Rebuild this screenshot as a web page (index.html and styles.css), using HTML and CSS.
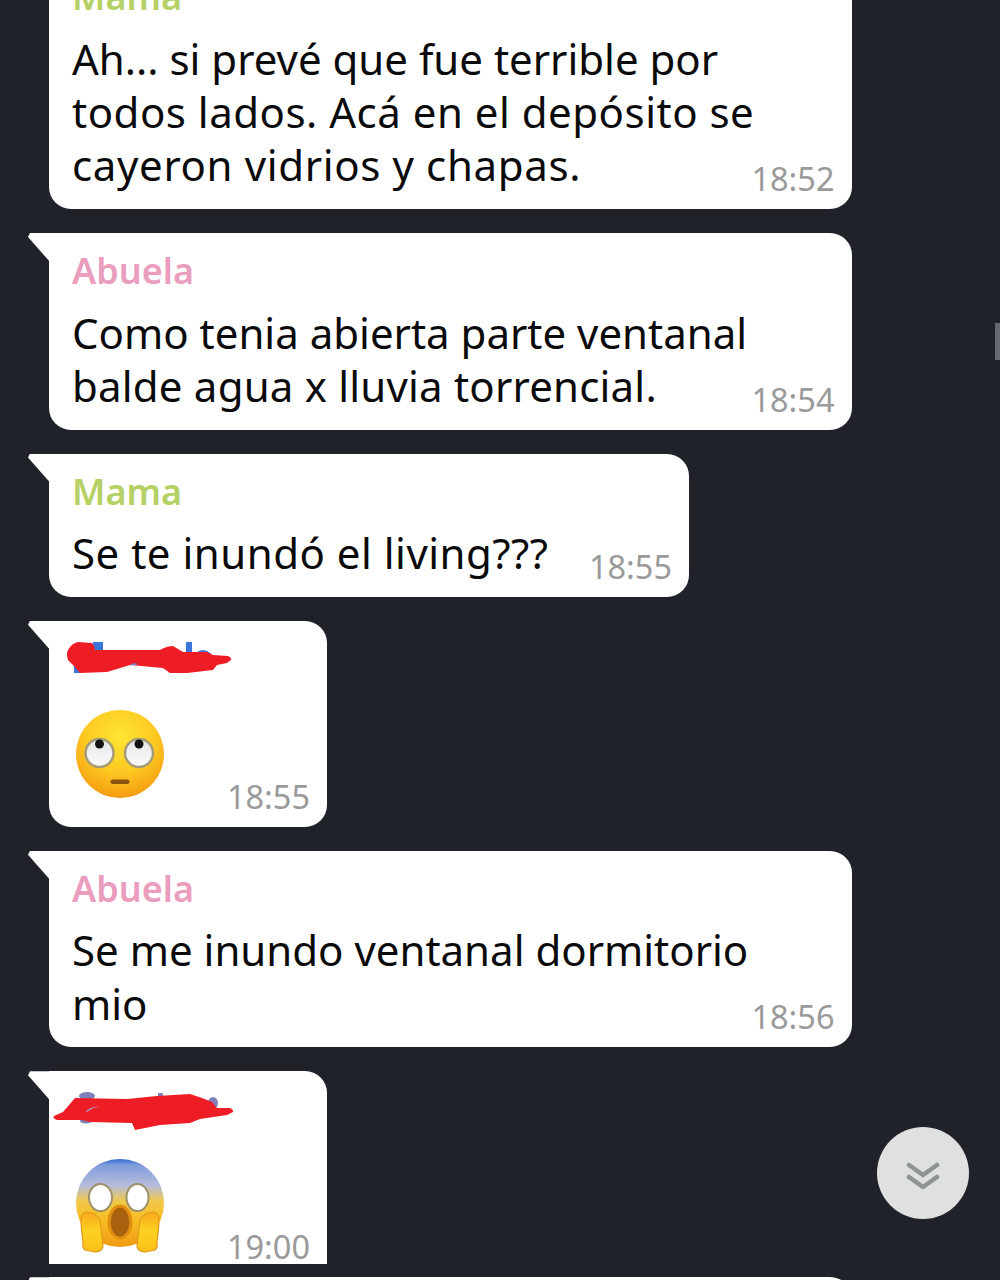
FILE: index.html
```html
<!DOCTYPE html>
<html>
<head>
    <title>Chat</title>
    <link rel="stylesheet" href="styles.css">
</head>
<body>
    <div id="chat">

        <div class="bubble wide first">
            <div class="name mama">Mama</div>
            <div class="body">
                <div class="text">Ah... si prevé que fue terrible por<br><span class="loose">todos lados. Acá en el depósito se</span><br><span class="looser">cayeron vidrios y chapas.</span></div>
                <div class="time">18:52</div>
            </div>
        </div>

        <div class="bubble wide tail">
            <div class="name abuela">Abuela</div>
            <div class="body">
                <div class="text">Como tenia abierta parte ventanal<br><span class="slight">balde agua x lluvia torrencial.</span></div>
                <div class="time">18:54</div>
            </div>
        </div>

        <div class="bubble medium tail">
            <div class="name mama">Mama</div>
            <div class="body">
                <div class="text loose">Se te inundó el living???</div>
                <div class="time">18:55</div>
            </div>
        </div>

        <div class="bubble small tail">
            <svg class="scribble" width="180" height="46" viewBox="0 0 180 46">
                <rect x="10" y="28" width="6" height="9" fill="#3a76d8"/>
                <rect x="29" y="6" width="10" height="10" fill="#3a76d8"/>
                <rect x="122" y="6" width="6" height="10" fill="#3a76d8"/>
                <circle cx="139" cy="24" r="10" fill="#3a76d8"/>
                <path d="M4 14 Q8 7 14 6 L28 7 Q31 10 31 14 L96 14 Q103 10 109 10 L119 16 L143 16 L149 19 L164 20 Q168 22 167 24 L163 27 L153 29 L149 34 L123 37 L106 37 L99 32 L66 29 L43 36 L16 37 L9 29 L4 24 Q2 18 4 14z" fill="#ee1c25"/>
                <path d="M66 29 q4 -3 8 -1 q-4 2 -8 1z" fill="#6a86d8"/>
            </svg>
            <svg class="emoji" width="90" height="90" viewBox="0 0 90 90">
                <defs>
                    <radialGradient id="face" cx="0.5" cy="0.3" r="0.72">
                        <stop offset="0" stop-color="#ffe635"/>
                        <stop offset="0.55" stop-color="#fdc922"/>
                        <stop offset="0.9" stop-color="#f6a514"/>
                        <stop offset="1" stop-color="#ee9212"/>
                    </radialGradient>
                    <linearGradient id="eyeball" x1="0" y1="0" x2="0" y2="1">
                        <stop offset="0" stop-color="#e6e6e6"/>
                        <stop offset="1" stop-color="#fbfbfb"/>
                    </linearGradient>
                </defs>
                <circle cx="45" cy="45" r="44" fill="url(#face)"/>
                <circle cx="24.5" cy="44" r="14" fill="url(#eyeball)" stroke="#a59c78" stroke-width="2.5"/>
                <circle cx="64" cy="44" r="14" fill="url(#eyeball)" stroke="#a59c78" stroke-width="2.5"/>
                <circle cx="24.5" cy="35" r="4.5" fill="#111"/>
                <circle cx="64" cy="35" r="4.5" fill="#111"/>
                <rect x="35.5" y="70.5" width="19" height="4.5" rx="2.2" fill="#8a5412"/>
            </svg>
            <div class="time">18:55</div>
        </div>

        <div class="bubble wide tail">
            <div class="name abuela">Abuela</div>
            <div class="body">
                <div class="text">Se me inundo ventanal dormitorio<br>mio</div>
                <div class="time">18:56</div>
            </div>
        </div>

        <div class="bubble small tail cut">
            <svg class="scribble" width="182" height="46" viewBox="0 0 182 46">
                <ellipse cx="34" cy="10" rx="8" ry="4" fill="#8080b8"/>
                <rect x="105" y="7" width="5" height="5" fill="#8080b8"/>
                <ellipse cx="33" cy="35" rx="6" ry="2.5" fill="#8080b8"/>
                <ellipse cx="160" cy="17" rx="5" ry="6" fill="#8080b8"/>
                <path d="M1 30 L10 26 L22 12 L74 13 L104 10 L137 8 L149 12 L159 16 L164 22 L177 22 Q181 24 180 26 L174 29 L147 33 L137 37 L107 39 L82 44 L79 37 L37 36 L29 34 L4 34 Q-1 32 1 30z" fill="#ee1c25"/>
                <path d="M32 26 q6 -6 15 -5 q-7 0 -10 3 q-3 2 -5 2z" fill="#a9a0d0"/>
            </svg>
            <svg class="emoji shock" width="90" height="96" viewBox="0 0 90 96">
                <defs>
                    <linearGradient id="scared" x1="0" y1="0" x2="0" y2="1">
                        <stop offset="0" stop-color="#2f6fd0"/>
                        <stop offset="0.07" stop-color="#7f9cdc"/>
                        <stop offset="0.3" stop-color="#b6bcdc"/>
                        <stop offset="0.48" stop-color="#f0c84a"/>
                        <stop offset="0.7" stop-color="#f8bd20"/>
                        <stop offset="1" stop-color="#f09a14"/>
                    </linearGradient>
                    <linearGradient id="hand" x1="0" y1="0" x2="0" y2="1">
                        <stop offset="0" stop-color="#f7a81b"/>
                        <stop offset="0.45" stop-color="#fdd023"/>
                        <stop offset="1" stop-color="#fcc01a"/>
                    </linearGradient>
                </defs>
                <circle cx="45" cy="45" r="44" fill="url(#scared)"/>
                <ellipse cx="25.5" cy="39.5" rx="11.5" ry="13.5" fill="white" stroke="#9c916a" stroke-width="2"/>
                <ellipse cx="62.5" cy="39.5" rx="11" ry="13.5" fill="white" stroke="#9c916a" stroke-width="2"/>
                <ellipse cx="45" cy="64" rx="12.5" ry="17.5" fill="#e08f12"/>
                <ellipse cx="45" cy="64" rx="9.3" ry="14.5" fill="#a8620f"/>
                <path d="M6 59 Q8 54 13 54 Q21 55 25 62 Q27 76 28 89 Q26 94 20 94 L10 92 Q7 89 8 84 Q6 70 6 59z" fill="url(#hand)" stroke="#e09a18" stroke-width="1.2"/>
                <path d="M84 59 Q82 54 77 54 Q69 55 65 62 Q63 76 62 89 Q64 94 70 94 L80 92 Q83 89 82 84 Q84 70 84 59z" fill="url(#hand)" stroke="#e09a18" stroke-width="1.2"/>
            </svg>
            <div class="time">19:00</div>
        </div>

        <div class="bubble wide tail next"></div>
    </div>

    <div id="scrollTab"></div>

    <div id="toBottom">
        <svg width="36" height="32" viewBox="0 0 36 32">
            <path d="M4 8 L18 18 L32 8 M4 20 L18 30 L32 20" fill="none" stroke="#8e9393" stroke-width="4.5" stroke-linecap="round"/>
        </svg>
    </div>
</body>
</html>
```

FILE: styles.css
```css
html, body {
    margin: 0;
    height: 1280px;
    overflow: hidden;
}
body {
    font-family: "Noto Sans", "Open Sans", sans-serif;
    background-color: #1f2329;
    color: #0a0a0a;
    position: relative;
}
#chat {
    padding-left: 49px;
    display: flex;
    flex-direction: column;
    align-items: flex-start;
    gap: 24px;
    margin-top: -40.75px;
}
.bubble {
    position: relative;
    box-sizing: border-box;
    background-color: white;
    border-radius: 0 22px 22px 22px;
    padding: 14px 17px 17.5px 23px;
}
.bubble.tail::before {
    content: "";
    position: absolute;
    left: -21px;
    top: 0;
    width: 22px;
    height: 29px;
    background-color: white;
    clip-path: polygon(2px 0, 100% 0, 100% 100%, 0 4px);
}
.wide {
    width: 803px;
    padding-right: 17.5px;
}
.medium { width: 640px; }
.small {
    width: 278px;
    height: 206px;
}
.first { border-radius: 0 0 22px 22px; }
.cut {
    height: 193px;
    border-radius: 0 22px 0 0;
}
.next {
    height: 60px;
    margin-top: -11px;
    border-radius: 0 22px 0 0;
}
.name {
    font-size: 36px;
    line-height: 48px;
    font-weight: 600;
    margin-bottom: 10.5px;
}
.mama { color: #b5d064; }
.abuela { color: #eb9dbd; }
.body {
    display: flex;
    align-items: flex-end;
}
.text {
    flex: 1;
    min-width: 0;
    white-space: nowrap;
    font-size: 42px;
    line-height: 53.25px;
}
.slight { letter-spacing: 0.2px; }
.loose { letter-spacing: 0.5px; }
.looser { letter-spacing: 0.64px; }
.time {
    flex: none;
    font-size: 32.5px;
    line-height: 40px;
    color: #9a9a9a;
    margin-bottom: -7.5px;
}
.small .time {
    position: absolute;
    right: 17px;
    top: 156px;
    margin: 0;
}
.scribble {
    position: absolute;
    left: 15px;
    top: 15px;
}
.cut .scribble {
    left: 4px;
    top: 15px;
}
.emoji {
    position: absolute;
    left: 26px;
    top: 88px;
}
.shock { top: 87px; }
#scrollTab {
    position: absolute;
    right: 0;
    top: 323px;
    width: 5px;
    height: 37px;
    background-color: #666a6e;
}
#toBottom {
    position: absolute;
    left: 877px;
    top: 1127px;
    width: 92px;
    height: 92px;
    border-radius: 50%;
    background-color: #dfe1e1;
    display: flex;
    align-items: center;
    justify-content: center;
}
```
